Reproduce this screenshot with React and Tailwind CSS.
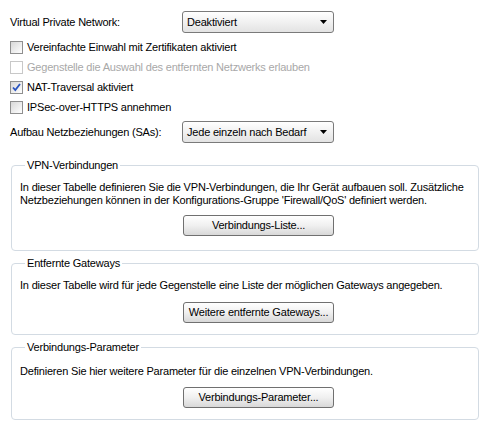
import React from 'react';

const font = { fontFamily: '"Liberation Sans", Arial, sans-serif' };

const Select = ({ value, width = 'w-[152px]' }) => (
  <div className={`${width} h-[22px] border border-[#7a7a7a] rounded-[3px] bg-gradient-to-b from-white to-[#e3e3e3] flex items-center justify-between pl-[4px] pr-[6px]`}>
    <span className="text-[11px] tracking-[-0.2px] text-black">{value}</span>
    <svg width="7" height="4" viewBox="0 0 7 4"><path d="M0 0h7L3.5 4z" fill="#000" /></svg>
  </div>
);

const Checkbox = ({ label, checked, disabled }) => (
  <div className="h-[20px] flex items-center gap-[4px]">
    <div className={`w-[13px] h-[13px] border flex items-center justify-center ${disabled ? 'border-[#c8c8c8] bg-white' : 'border-[#8f8f8f] bg-gradient-to-br from-[#d8d8d8] to-white'}`}>
      {checked && (
        <svg width="9" height="9" viewBox="0 0 9 9"><path d="M1 4.5l2.3 2.5L8 1" stroke="#2a54c0" strokeWidth="1.8" fill="none" /></svg>
      )}
    </div>
    <span className={`text-[11px] tracking-[-0.2px] ${disabled ? 'text-[#a8a8a8]' : 'text-black'}`}>{label}</span>
  </div>
);

const Button = ({ children }) => (
  <button className="w-[151px] h-[21px] border border-[#707070] rounded-[3px] bg-gradient-to-b from-white via-[#f0f0f0] to-[#d8d8d8] text-[11px] tracking-[-0.2px] text-black flex items-center justify-center">
    {children}
  </button>
);

const Group = ({ title, children, button, className = '' }) => (
  <fieldset className={`border border-[#d3dbe3] rounded-[4px] pl-[8px] pr-[6px] ${className}`}>
    <legend className="ml-[5px] px-[2px] text-[11px] tracking-[-0.2px] leading-[13px] text-black">{title}</legend>
    <div className="text-[11px] tracking-[-0.2px] leading-[13px] text-black">{children}</div>
    <div className="flex pl-[163px]">
      <Button>{button}</Button>
    </div>
  </fieldset>
);

export default function App() {
  return (
    <div className="w-[489px] h-[433px] bg-white pl-[10px] pr-[10px] pt-[11px]" style={font}>
      <div className="flex items-center h-[22px]">
        <span className="w-[172px] text-[11px] tracking-[-0.2px] text-black">Virtual Private Network:</span>
        <Select value="Deaktiviert" />
      </div>
      <div className="mt-[4px] flex flex-col">
        <Checkbox label="Vereinfachte Einwahl mit Zertifikaten aktiviert" />
        <Checkbox label="Gegenstelle die Auswahl des entfernten Netzwerks erlauben" disabled />
        <Checkbox label="NAT-Traversal aktiviert" checked />
        <Checkbox label="IPSec-over-HTTPS annehmen" />
      </div>
      <div className="flex items-center h-[22px] mt-[4px]">
        <span className="w-[172px] text-[11px] tracking-[-0.2px] text-black">Aufbau Netzbeziehungen (SAs):</span>
        <Select value="Jede einzeln nach Bedarf" />
      </div>

      <Group title="VPN-Verbindungen" button="Verbindungs-Liste..." className="mt-[16px] h-[92px] ml-[1px]">
        <p className="mt-[9px] mb-[8px]">
          In dieser Tabelle definieren Sie die VPN-Verbindungen, die Ihr Gerät aufbauen soll. Zusätzliche Netzbeziehungen können in der Konfigurations-Gruppe 'Firewall/QoS' definiert werden.
        </p>
      </Group>

      <Group title="Entfernte Gateways" button="Weitere entfernte Gateways..." className="mt-[6px] h-[78px] ml-[1px]">
        <p className="mt-[9px] mb-[10px]">
          In dieser Tabelle wird für jede Gegenstelle eine Liste der möglichen Gateways angegeben.
        </p>
      </Group>

      <Group title="Verbindungs-Parameter" button="Verbindungs-Parameter..." className="mt-[6px] h-[79px] ml-[1px]">
        <p className="mt-[11px] mb-[9px]">
          Definieren Sie hier weitere Parameter für die einzelnen VPN-Verbindungen.
        </p>
      </Group>
    </div>
  );
}
